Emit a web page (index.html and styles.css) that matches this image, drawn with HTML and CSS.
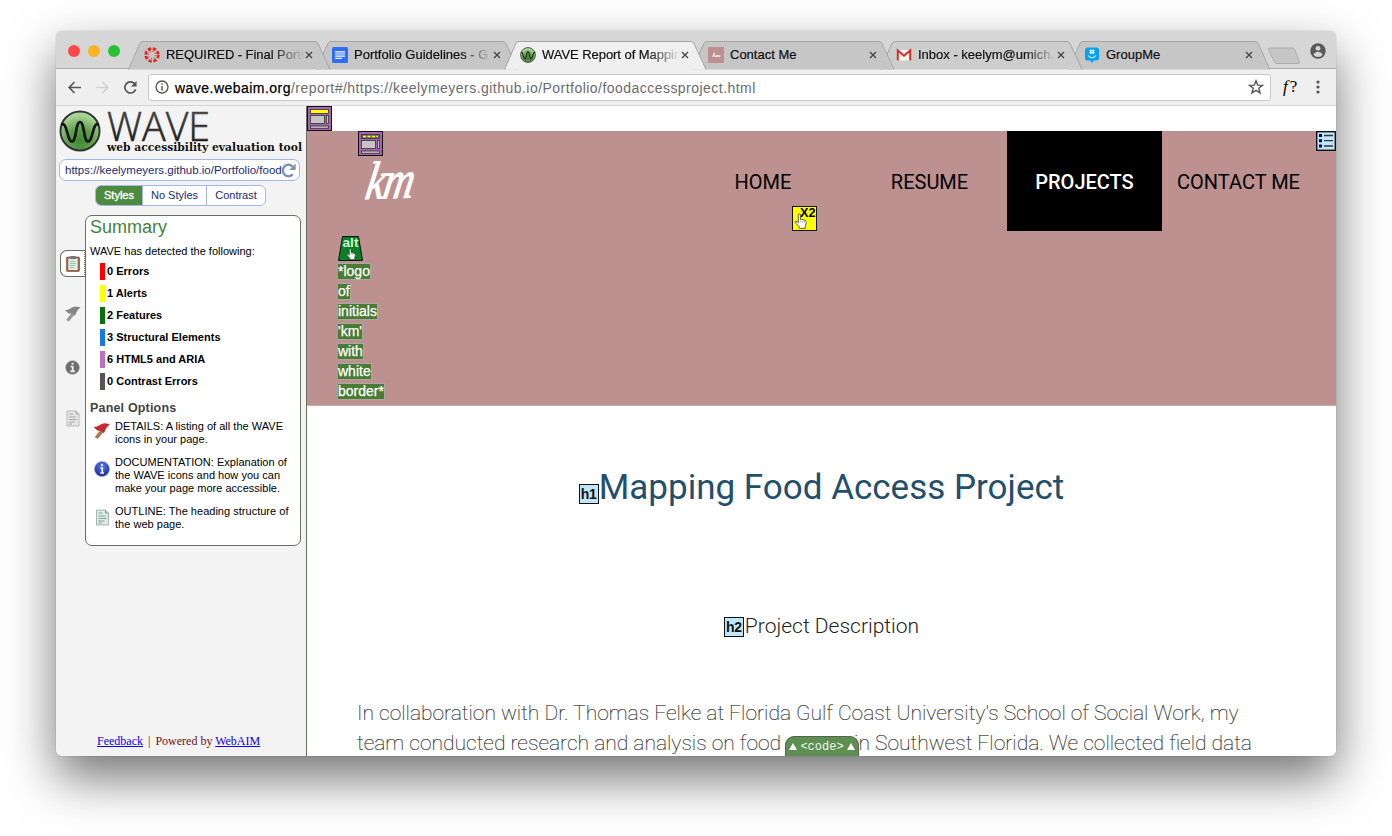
FILE: index.html
```html
<!DOCTYPE html>
<html lang="en">
<head>
<meta charset="utf-8">
<title>WAVE Report of Mapping Food Access Project</title>
<link rel="stylesheet" href="styles.css">
</head>
<body>
<svg width="0" height="0" class="defs">
  <defs>
    <radialGradient id="ball" cx="50%" cy="75%" r="65%"><stop offset="0" stop-color="#3f8a33"/><stop offset=".5" stop-color="#5fa04f"/><stop offset="1" stop-color="#a9d596"/></radialGradient>
    <linearGradient id="ink" x1="0" y1="0" x2="0" y2="1"><stop offset="0" stop-color="#555"/><stop offset="1" stop-color="#111"/></linearGradient>
    <radialGradient id="blue" cx="50%" cy="30%" r="70%"><stop offset="0" stop-color="#5c7ce0"/><stop offset="1" stop-color="#1526a0"/></radialGradient>
    <symbol id="tab" viewBox="0 0 204 29"><path d="M.5 28.5 L12 2.2 Q13 .5 15 .5 H187 Q189 .5 190 2.5 L202 28.5"/></symbol>
    <symbol id="x" viewBox="0 0 8 8"><path d="M1 1 L7 7 M7 1 L1 7" stroke="#444" stroke-width="1.3" fill="none"/></symbol>
    <symbol id="hand" viewBox="0 0 12 15"><path d="M4 9 V2 Q4 .8 5 .8 T6 2 V6 L7.5 6 L9 6.5 L10.8 7.2 Q11.5 7.6 11.4 9 L10.5 12.5 V14.4 H4.8 V13 L1 8.8 Q.6 7.8 1.6 7.6 Z" fill="#fff" stroke="#444" stroke-width=".8"/><path d="M6.2 7V9M8 7.2V9M9.7 7.5V9" stroke="#777" stroke-width=".5"/></symbol>
    <symbol id="wave" viewBox="0 0 42 42"><circle cx="21" cy="21" r="19.5" fill="url(#ball)" stroke="#333" stroke-width="2"/><path d="M2.500 15 C8 10 8 31.500 13 31.500 C17.500 31.500 16.500 12 21 12 C25.500 12 24.500 31.500 29 31.500 C34 31.500 34 10 39.500 15" fill="none" stroke="#151515" stroke-width="2.700"/></symbol>
    <symbol id="flag" viewBox="0 0 18 18"><path d="M8 8.500 L10.800 10.500 L5 17.500 L2.300 16Z" fill="var(--pole)"/><path d="M1 5.500 L4 5 L9 2.500 L12 1.500 L17.500 2.500 L14 6 L11.500 11.500 L8 9 L5 9Z"/></symbol>
    <symbol id="page" viewBox="0 0 14 17"><path d="M1 1H10L13 4V16H1Z"/><path d="M10 1V4H13M3 4H7M3 7H10M3 9.500H11M3 12H9M3 14H6" fill="none" stroke="currentColor" stroke-width=".8"/></symbol>
  </defs>
</svg>

<main class="window">
  <header class="strip">
    <div class="lights"><i class="red"></i><i class="amber"></i><i class="green"></i></div>
    <div class="tabs">
      <div class="tab t1"><svg class="shape"><use href="#tab"/></svg><svg class="fav" viewBox="0 0 16 16"><circle cx="8" cy="8" r="6.300" fill="none" stroke="#e1261c" stroke-width="2.800" stroke-dasharray="3.300 1.648"/><circle cx="8" cy="8" r="3.700" fill="none" stroke="#e1261c" stroke-width="1.100" stroke-dasharray="1 1.906"/></svg><span class="title fade">REQUIRED - Final Portf</span><svg class="close"><use href="#x"/></svg></div>
      <div class="tab t2"><svg class="shape"><use href="#tab"/></svg><svg class="fav" viewBox="0 0 16 16"><rect width="16" height="16" rx="1.500" fill="#2f6df3"/><path d="M3 4.800H13M3 7H13M3 9.200H13M3 11.400H10" stroke="#fff" stroke-width="1.200"/></svg><span class="title fade">Portfolio Guidelines - G</span><svg class="close"><use href="#x"/></svg></div>
      <div class="tab t3"><svg class="shape"><use href="#tab"/></svg><svg class="fav"><use href="#wave"/></svg><span class="title fade">WAVE Report of Mappin</span><svg class="close"><use href="#x"/></svg></div>
      <div class="tab t4"><svg class="shape"><use href="#tab"/></svg><svg class="fav" viewBox="0 0 16 16"><rect width="16" height="16" fill="#c09090"/><path d="M4.500 10L6.500 5.500M5 8.500L7 7.500M6 8L7 10L9 8L9 10L11 8L11 10L12.500 9" fill="none" stroke="#fff" stroke-width=".9"/></svg><span class="title">Contact Me</span><svg class="close"><use href="#x"/></svg></div>
      <div class="tab t5"><svg class="shape"><use href="#tab"/></svg><svg class="fav" viewBox="0 0 16 16"><path d="M1 3H15V13.500H1Z" fill="#f4f4f4"/><path d="M1.800 13.500V3.500L8 8.700L14.200 3.500V13.500" fill="none" stroke="#d93025" stroke-width="2"/></svg><span class="title fade">Inbox - keelym@umich.</span><svg class="close"><use href="#x"/></svg></div>
      <div class="tab t6"><svg class="shape"><use href="#tab"/></svg><svg class="fav" viewBox="0 0 16 16"><path d="M3 .5H12.500Q15 .5 15 3V11Q15 13.500 12.500 13.500H10L8 16L6 13.500H3.500Q1 13.500 1 11V3Q1 .5 3 .5Z" fill="#08a0ef"/><path d="M6.800 2.500V7M9.200 2.500V7M5.500 3.700H10.500M5.500 5.800H10.500M4 8.500Q8 13 12 8.500" fill="none" stroke="#fff" stroke-width="1"/></svg><span class="title">GroupMe</span><svg class="close"><use href="#x"/></svg></div>
    </div>
    <svg class="newtab" viewBox="0 0 34 18"><path d="M3 1H25Q27 1 28 3L32 14Q33 16.500 31 16.500H10Q8 16.500 7 14L1.500 3Q1 1 3 1Z" fill="#c6c6c6" stroke="#adadad"/></svg>
    <svg class="person" viewBox="0 0 16 16"><circle cx="8" cy="8" r="7.700" fill="#595959"/><circle cx="8" cy="5.300" r="2.400" fill="#d6d6d6"/><path d="M3.300 11.500Q5 8.800 8 8.800T12.700 11.500Q11 14 8 14T3.300 11.500Z" fill="#d6d6d6"/></svg>
  </header>

  <div class="toolbar">
    <svg class="nav" viewBox="0 0 14 14"><path d="M14 7H1.500M7 1L1.200 7L7 13" fill="none" stroke="#555" stroke-width="1.700"/></svg>
    <svg class="nav" viewBox="0 0 14 14"><path d="M0 7H12.500M7 1L12.800 7L7 13" fill="none" stroke="#d0d0d0" stroke-width="1.700"/></svg>
    <svg class="nav" viewBox="0 0 14 14"><path d="M12.600 9A6 6 0 1 1 11.500 3" fill="none" stroke="#555" stroke-width="1.800"/><path d="M13.500 0V6H7.500Z" fill="#555"/></svg>
    <div class="address">
      <svg class="info" viewBox="0 0 14 14"><circle cx="7" cy="7" r="6" fill="none" stroke="#555" stroke-width="1.300"/><path d="M7 3.300V4.800M7 6V10.700" stroke="#555" stroke-width="1.400"/></svg>
      <span class="url"><b>wave.webaim.org</b>/report#/https://keelymeyers.github.io/Portfolio/foodaccessproject.html</span>
      <svg class="star" viewBox="0 0 16 16"><path d="M8 1.800L9.700 6.100L14.400 6.400L10.800 9.300L12 13.900L8 11.400L4 13.900L5.200 9.300L1.600 6.400L6.300 6.100Z" fill="none" stroke="#555" stroke-width="1.400"/></svg>
    </div>
    <span class="fq"><i>f</i>?</span>
    <svg class="dots" viewBox="0 0 4 14"><circle cx="2" cy="2" r="1.600" fill="#555"/><circle cx="2" cy="7" r="1.600" fill="#555"/><circle cx="2" cy="12" r="1.600" fill="#555"/></svg>
  </div>

  <div class="body">
    <aside class="side">
      <div class="brand">
        <svg class="ball"><use href="#wave"/></svg>
        <svg class="word" width="200" height="50" viewBox="0 0 200 50"><text x="2" y="34.500" textLength="103" lengthAdjust="spacingAndGlyphs" class="w1">WAVE</text><text x="2" y="45" textLength="195" lengthAdjust="spacingAndGlyphs" class="w2">web accessibility evaluation tool</text></svg>
      </div>
      <div class="field"><span>https://keelymeyers.github.io/Portfolio/food</span><svg viewBox="0 0 14 14"><path d="M11 10.500A5.300 5.300 0 1 1 11 3.500" fill="none" stroke="#8194ae" stroke-width="2.300"/><path d="M13.700 .5V6.500H7.700Z" fill="#8194ae"/></svg></div>
      <div class="modes"><span class="on">Styles</span><span>No Styles</span><span>Contrast</span></div>
      <div class="panels">
        <div class="rail">
          <div class="cur"><svg viewBox="0 0 14 17"><rect x=".5" y="2" width="13" height="14.500" rx="1" fill="#a5624a" stroke="#764331" stroke-width=".6"/><rect x="2.300" y="3.500" width="9.400" height="11.500" fill="#dcebe6"/><rect x="4" y="1" width="6" height="3" rx=".8" fill="#777"/><path d="M4 6.500H9M4 8.500H10M4 10.500H9M4 12.500H8" stroke="#8db5a8" stroke-width=".8"/></svg></div>
          <svg class="r-flag"><use href="#flag"/></svg>
          <svg class="r-info" viewBox="0 0 16 16"><circle cx="8" cy="8" r="7.300" fill="#6d6d6d" stroke="#999" stroke-width=".7"/><path d="M8 3V5M6 7H8.200V12M5.800 12H10.400" stroke="#eee" stroke-width="1.900" fill="none"/></svg>
          <svg class="r-page"><use href="#page"/></svg>
        </div>
        <section class="panel">
          <h2>Summary</h2>
          <p class="lead">WAVE has detected the following:</p>
          <ul>
            <li class="c-red">0 Errors</li><li class="c-yellow">1 Alerts</li><li class="c-green">2 Features</li><li class="c-blue">3 Structural Elements</li><li class="c-purple">6 HTML5 and ARIA</li><li class="c-gray">0 Contrast Errors</li>
          </ul>
          <h3>Panel Options</h3>
          <div class="opt"><svg class="o-flag"><use href="#flag"/></svg><p>DETAILS: A listing of all the WAVE<br>icons in your page.</p></div>
          <div class="opt"><svg class="o-info" viewBox="0 0 16 16"><circle cx="8" cy="8" r="7.500" fill="url(#blue)" stroke="#8d9bd0" stroke-width=".7"/><path d="M8 3V5M6.500 7H8.300V12M6.300 12H10" stroke="#fff" stroke-width="1.600" fill="none"/></svg><p>DOCUMENTATION: Explanation of<br>the WAVE icons and how you can<br>make your page more accessible.</p></div>
          <div class="opt"><svg class="o-page"><use href="#page"/></svg><p>OUTLINE: The heading structure of<br>the web page.</p></div>
        </section>
      </div>
      <footer><a href="#">Feedback</a><span class="bar">|</span><span>Powered by <a href="#">WebAIM</a></span></footer>
    </aside>

    <article class="site">
      <div class="top"><svg class="aria" viewBox="0 0 25 25"><rect x=".5" y=".5" width="24" height="24" fill="#a862b0" stroke="#111"/><g stroke="#333" stroke-width=".8"><rect x="3.500" y="3.500" width="18" height="4" fill="#ff0"/><rect x="3.500" y="9.500" width="14" height="8" fill="#c5c5c5"/><rect x="19.500" y="9.500" width="2" height="8" fill="#c5c5c5"/><rect x="3.500" y="20" width="18" height="2.300" fill="#c5c5c5"/></g></svg></div>
      <div class="hero">
        <div class="logo">
          <svg class="aria" viewBox="0 0 25 25"><rect x=".5" y=".5" width="24" height="24" fill="#a862b0" stroke="#111"/><g stroke="#333" stroke-width=".8"><rect x="3.500" y="3.500" width="18" height="4" fill="#666"/><path d="M5 5.500H20" stroke="#ff0" stroke-width="1.500" stroke-dasharray="3 1.500"/><rect x="3.500" y="9.500" width="14" height="8" fill="#c5c5c5"/><rect x="19.500" y="9.500" width="2" height="8" fill="#c5c5c5"/><rect x="3.500" y="20" width="18" height="2.300" fill="#c5c5c5"/></g></svg>
          <svg class="km" viewBox="0 0 56 50"><text x="0" y="0" transform="translate(4 43) rotate(-2) skewX(-12) scale(1.240 1.560)">km</text></svg>
          <svg class="alt" viewBox="0 0 25 25"><path d="M4.500 .5H20.500L24.500 24.500H.5Z" fill="#078124" stroke="#111"/><text x="4.500" y="11" textLength="16" lengthAdjust="spacingAndGlyphs">alt</text><use href="#hand" x="8" y="12" width="10" height="12"/></svg>
          <div class="alttext"><span>*logo</span><span>of</span><span>initials</span><span>'km'</span><span>with</span><span>white</span><span>border*</span></div>
        </div>
        <nav>
          <a class="home">HOME<svg class="x2" viewBox="0 0 25 25"><rect x=".5" y=".5" width="24" height="24" fill="#ff0" stroke="#111"/><text x="8" y="10.500" textLength="15.500" lengthAdjust="spacingAndGlyphs">X2</text><use href="#hand" x="2" y="7" width="13" height="16"/></svg></a>
          <a>RESUME</a><a class="here">PROJECTS</a><a class="contact">CONTACT ME</a>
        </nav>
        <svg class="list" viewBox="0 0 20 20"><rect x=".7" y=".7" width="18.600" height="18.600" fill="#bfe6fb" stroke="#111" stroke-width="1.400"/><path d="M3 4.500H6M3 9.700H6M3 15H6" stroke="#006" stroke-width="3"/><path d="M8 4.500H17M8 9.700H17M8 15H17" stroke="#333" stroke-width="1.300"/></svg>
      </div>
      <h1><span class="hx">h1</span>Mapping Food Access Project</h1>
      <h2 class="sub"><span class="hx">h2</span>Project Description</h2>
      <p class="copy">In collaboration with Dr. Thomas Felke at Florida Gulf Coast University's School of Social Work, my<br>team conducted research and analysis on food <span class="gap"></span>in Southwest Florida. We collected field data</p>
      <div class="code"><i></i><span>&lt;code&gt;</span><i></i></div>
    </article>
  </div>
</main>
</body>
</html>
```
FILE: styles.css
```css
* { box-sizing: border-box; }
body { margin: 0; padding: 31px 56px; width: 1392px; height: 836px; overflow: hidden; background: #fff; font-family: "Liberation Sans", Arial, sans-serif; }
svg { display: block; flex: none; }
.defs { position: absolute; }
p, h1, h2, h3, ul { margin: 0; padding: 0; }
.window { width: 1280px; height: 725px; border-radius: 6px; background: #fff; box-shadow: 0 22px 50px rgba(0,0,0,.55), 0 0 1px rgba(0,0,0,.5); display: flex; flex-direction: column; }

.strip { height: 38px; background: #d6d6d6; border-radius: 6px 6px 0 0; display: flex; flex: none; border-bottom: 1px solid #adadad; }
.lights { display: flex; gap: 8px; padding: 14px 0 0 12px; width: 72px; }
.lights i { width: 12px; height: 12px; border-radius: 50%; }
.red { background: #fc4948; } .amber { background: #fdb225; } .green { background: #29c231; }
.tabs { display: flex; padding-top: 10px; }
.tab { position: relative; width: 188px; height: 28px; display: flex; align-items: center; padding-left: 16px; isolation: isolate; }
.shape { position: absolute; left: 0; top: 0; width: 204px; height: 29px; fill: #c6c6c6; stroke: #a5a5a5; z-index: -1; }
.t1 { z-index: 5; } .t2 { z-index: 4; } .t3 { z-index: 6; } .t4 { z-index: 3; } .t5 { z-index: 2; } .t6 { z-index: 1; }
.t3 .shape { fill: #efefef; }
.t5 .shape { fill: #cdcdcd; }
.fav { width: 16px; height: 16px; margin-right: 6px; }
.title { width: 138px; font-size: 13px; letter-spacing: 0; color: #111; white-space: nowrap; overflow: hidden; line-height: 18px; -webkit-text-stroke: .2px #111; }
.fade { -webkit-mask-image: linear-gradient(90deg, #000 77%, transparent 100%); mask-image: linear-gradient(90deg, #000 77%, transparent 100%); }
.t1 .title, .t3 .title { letter-spacing: -.05px; }
.close { width: 8px; height: 8px; margin-left: 1px; }
.newtab { width: 34px; height: 18px; margin: 16px 0 0 11px; z-index: 1; }
.person { width: 16px; height: 16px; margin: 12px 0 0 9px; }

.toolbar { height: 37px; flex: none; background: #efefef; border-bottom: 1px solid #d5d5d5; display: flex; align-items: center; padding-left: 12px; }
.nav { width: 13px; height: 13px; margin-right: 15px; }
.address { width: 1123px; height: 27px; margin-left: -4px; border: 1px solid #c8c8c8; border-radius: 3px; background: #fff; display: flex; align-items: center; padding: 0 6px; }
.info { width: 14px; height: 14px; margin-right: 6px; }
.url { flex: 1; font-size: 14px; letter-spacing: .465px; color: #6b6b6b; line-height: 18px; padding-top: 1px; }
.url b { font-weight: 400; color: #000; -webkit-text-stroke: .25px #000; }
.star { width: 16px; height: 16px; }
.fq { margin-left: 12px; width: 26px; font: 17px/20px "Liberation Serif", serif; }
.fq i { margin-right: 2px; }
.dots { width: 4px; height: 14px; margin-left: 7px; }

.body { flex: 1; display: flex; min-height: 0; }
.side { width: 251px; background: #f3f3f3; border-right: 1px solid #65705f; border-radius: 0 0 0 6px; padding-left: 3px; display: flex; flex-direction: column; flex: none; }
.brand { display: flex; height: 53px; padding-top: 4px; }
.ball { width: 42px; height: 42px; }
.word { margin-left: 4px; margin-top: -4px; overflow: visible; }
.w1 { font: 300 41px "Open Sans", Lato, sans-serif; fill: url(#ink); stroke: url(#ink); stroke-width: .6px; }
.w2 { font: bold 10.500px "DejaVu Serif", serif; fill: #111; }
.field { width: 241px; height: 22px; border: 1px solid #a4b6ee; border-radius: 7px; background: #fff; color: #222a6b; font-size: 11.500px; line-height: 21px; padding: 0 3px 0 5px; display: flex; align-items: center; justify-content: space-between; overflow: hidden; white-space: nowrap; }
.field span { width: 216px; letter-spacing: 0; }
.field svg { width: 15px; height: 15px; }
.modes { display: flex; width: 171px; height: 21px; margin: 4px 0 0 36px; border: 1px solid #a4b6ee; border-radius: 6px; overflow: hidden; background: #fff; color: #222a6b; font-size: 11px; line-height: 19px; text-align: center; }
.modes span { width: 64px; border-right: 1px solid #a4b6ee; }
.modes .on { width: 47px; background: #4c8a3e; color: #fff; -webkit-text-stroke: .35px #fff; }
.modes span:last-child { flex: 1; border: 0; }
.panels { display: flex; margin-top: 9px; }
.rail { width: 26px; padding: 35px 0 0 1px; display: flex; flex-direction: column; align-items: center; }
.cur { width: 25px; height: 27px; border: 1px solid #65705f; border-right: 1px dotted #777; border-radius: 7px 0 0 7px; background: #fff; padding: 4px 0 0 5px; z-index: 1; position: relative; }
.cur svg { width: 14px; height: 17px; }
.r-flag { width: 17px; height: 17px; margin-top: 28px; fill: #858585; --pole: #999; }
.r-info { width: 15px; height: 15px; margin-top: 38px; }
.r-page { width: 14px; height: 17px; margin-top: 35px; color: #999; fill: #e6e6e6; stroke: #999; stroke-width: .6; }
.panel { width: 216px; height: 331px; border: 1px solid #65705f; border-radius: 7px; background: #fff; padding: 0 0 0 4px; color: #000; }
.panel h2 { font-size: 18px; font-weight: 400; color: #438337; line-height: 23px; }
.lead { font-size: 11px; line-height: 14px; margin-top: 5px; letter-spacing: .01px; }
.panel ul { list-style: none; margin: 5px 0 0 10px; }
.panel li { font-size: 11px; font-weight: 700; line-height: 17px; height: 17px; margin: 2px 0 5px; border-left: 5px solid; padding-left: 2px; letter-spacing: .02px; }
.c-red { border-color: #f00 !important; } .c-yellow { border-color: #ff0 !important; } .c-green { border-color: #0a720a !important; } .c-blue { border-color: #1779e8 !important; } .c-purple { border-color: #ba72c0 !important; } .c-gray { border-color: #555 !important; }
.panel h3 { font-size: 12.500px; color: #444; line-height: 16px; margin-top: 10px; letter-spacing: .18px; }
.opt { display: flex; align-items: flex-start; margin: 4px 0 10px; }
.opt p { font-size: 11px; line-height: 13px; white-space: nowrap; letter-spacing: .02px; }
.opt svg { width: 17px; height: 17px; margin: 2px 5px 0 3px; }
.o-flag { fill: #cc2630; stroke: #8c3020; stroke-width: .4; --pole: #b07a50; }
.opt .o-info { width: 16px; height: 16px; margin: 5px 5px 0 4px; }
.opt .o-page { color: #6d8e86; fill: #dcebe6; stroke: #60756d; stroke-width: .5; margin: 4px 4px 0 4px; }
.side footer { margin: auto 0 8px 38px; font: 12px/14px "Liberation Serif", serif; color: #6b1111; white-space: nowrap; }
.side footer a { color: #0b00e0; }
.bar { margin: 0 5px; }

.site { flex: 1; position: relative; overflow: hidden; background: #fff; border-radius: 0 0 6px 0; font-family: Roboto, sans-serif; display: flex; flex-direction: column; align-items: stretch; min-width: 0; }
.aria { width: 25px; height: 25px; }
.top { height: 25px; flex: none; }
.hero { height: 275px; flex: none; background: #bc918f; display: flex; position: relative; border-bottom: 1px solid #cca9a7; }
.logo { width: 367px; padding-left: 31px; flex: none; }
.logo .aria { margin-left: 20px; }
.km { width: 56px; height: 50px; margin-left: 22px; overflow: visible; }
.km text { font: italic 400 34px "Liberation Serif", serif; fill: #fff; stroke: #fff; stroke-width: .7px; letter-spacing: -1px; }
.alt { width: 25px; height: 25px; margin-top: 30px; }
.alt text { font: 700 12px "Liberation Sans", sans-serif; fill: #cdf5cc; }
.alttext { display: flex; flex-direction: column; align-items: flex-start; gap: 3px; font: 14px/15px "Liberation Sans", sans-serif; color: #fff; padding-top: 2px; }
.alttext span { background: #497b35; border: 1px solid #a8aaa0; border-left: 0; height: 17px; -webkit-text-stroke: .25px #fff; }
nav { display: flex; height: 100px; font-size: 20px; line-height: 102px; text-align: center; color: #000; }
nav a { width: 155px; position: relative; }
nav .home { width: 178px; }
nav .contact { width: 153px; }
.here { background: #000; color: #fff; font-weight: 500; }
.x2 { position: absolute; left: 118px; top: 75px; width: 25px; height: 25px; }
.x2 text { font: 700 12px "Liberation Sans", sans-serif; }
.list { position: absolute; right: 0; top: 0; width: 20px; height: 20px; }
h1 { font-size: 35px; font-weight: 400; line-height: 44px; color: #234f6c; text-align: center; margin-top: 60px; white-space: nowrap; }
.hx { display: inline-block; width: 20px; height: 20px; border: 1.500px solid #111; background: #bfe6fb; color: #111; font: 700 14px/18px "Liberation Sans", sans-serif; letter-spacing: -.3px; text-align: center; margin-top: -4px; position: relative; }
.sub .hx { top: -1px; margin-right: 1px; }
.sub { font-size: 21px; font-weight: 300; line-height: 26px; color: #222; text-align: center; margin-top: 103px; white-space: nowrap; }
.copy { margin: 59px 0 0 50px; font-size: 21.040px; line-height: 30px; font-weight: 100; color: #222; white-space: nowrap; -webkit-text-stroke: .2px #444; }
.gap { display: inline-block; width: 68px; }
.code { position: absolute; left: 478px; bottom: 0; width: 74px; height: 20px; background: #5f8e53; border: 1px solid #50674a; border-bottom: 0; border-radius: 9px 9px 0 0; display: flex; align-items: center; justify-content: center; gap: 3px; color: #f0f6ee; font: 12px "Liberation Mono", monospace; }
.code i { border: 4px solid transparent; border-bottom: 7px solid #fff; border-top: 0; }
```
